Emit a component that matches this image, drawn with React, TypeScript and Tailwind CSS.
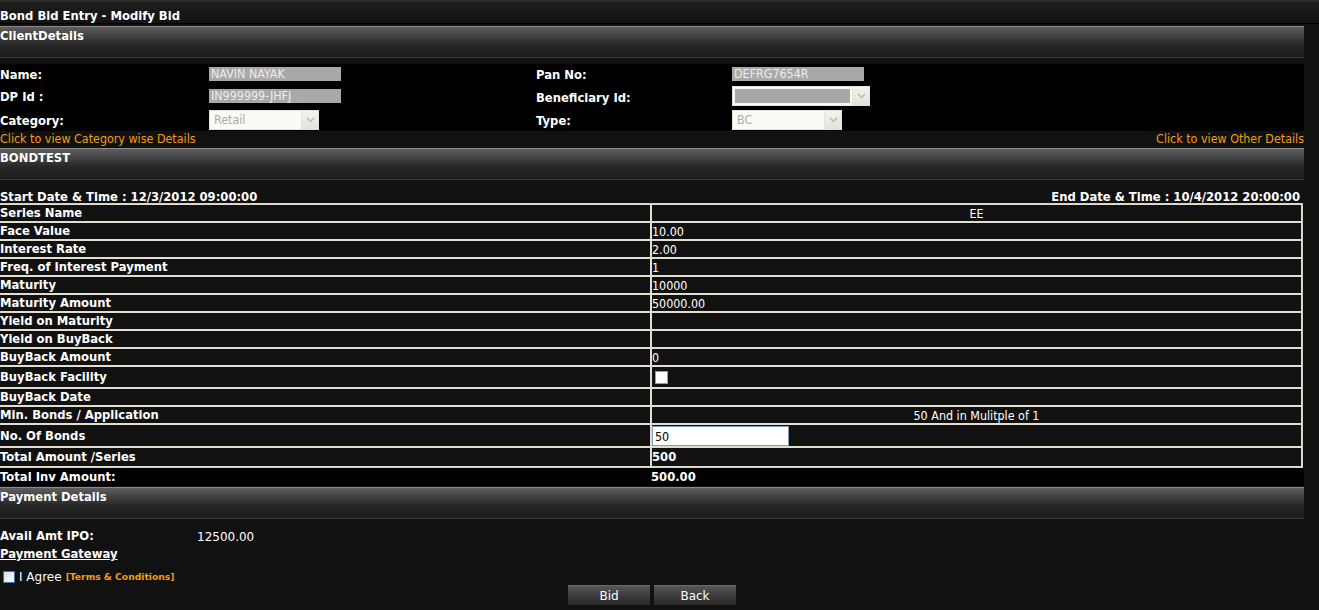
import React from 'react';

const BOLD = "font-['DejaVu_Sans',Verdana,sans-serif] font-bold text-[11.6px]";
const THIN = "font-['DejaVu_Sans_Condensed','DejaVu_Sans',Tahoma,sans-serif] text-[12.4px]";

function SectionBar({ title }: { title: string }) {
  return (
    <div className="h-[32px] w-[1304px] border-t border-[#8a8a8a] border-b border-b-[#3c3c3c] bg-[linear-gradient(to_bottom,#5e5e5e_0%,#464646_25%,#262626_60%,#1c1c1c_100%)] pt-[2px]">
      <div className={`${BOLD} text-white leading-[15px]`}>{title}</div>
    </div>
  );
}

function Chevron() {
  return (
    <svg width="9" height="6" viewBox="0 0 9 6" fill="none" stroke="#b8b8b0" strokeWidth="1.5">
      <path d="M1 1l3.5 3.5L8 1" />
    </svg>
  );
}

function FakeSelect({ width, value, gray }: { width: string; value?: string; gray?: boolean }) {
  return (
    <div className={`${width} h-[20px] flex border border-[#e4e4dc] bg-[#fbfbf6]`}>
      <div className={`flex-1 flex items-center px-[4px] ${gray ? 'bg-[#a8a8a8] m-[2px]' : ''}`}>
        <span className={`${THIN} text-[#ababab]`}>{value}</span>
      </div>
      <div className="w-[17px] flex items-center justify-center border-l border-[#e4e4dc] bg-[linear-gradient(to_bottom,#f4f4ee,#e2e2da)]">
        <Chevron />
      </div>
    </div>
  );
}

function GrayInput({ value }: { value: string }) {
  return (
    <div className="w-[132px] h-[14px] bg-[#a9a9a9] flex items-center px-[2px]">
      <span className={`${THIN} text-[#ececec] leading-[14px]`}>{value}</span>
    </div>
  );
}

const rows: { label: string; value?: React.ReactNode; h: string; center?: boolean; bold?: boolean }[] = [
  { label: 'Series Name', value: 'EE', h: 'h-[18px]', center: true },
  { label: 'Face Value', value: '10.00', h: 'h-[18px]' },
  { label: 'Interest Rate', value: '2.00', h: 'h-[18px]' },
  { label: 'Freq. of Interest Payment', value: '1', h: 'h-[18px]' },
  { label: 'Maturity', value: '10000', h: 'h-[18px]' },
  { label: 'Maturity Amount', value: '50000.00', h: 'h-[18px]' },
  { label: 'Yield on Maturity', h: 'h-[18px]' },
  { label: 'Yield on BuyBack', h: 'h-[18px]' },
  { label: 'BuyBack Amount', value: '0', h: 'h-[18px]' },
  {
    label: 'BuyBack Facility',
    value: <div className="ml-[3px] w-[13px] h-[13px] bg-white border border-[#9a9a9a]" />,
    h: 'h-[22px]',
  },
  { label: 'BuyBack Date', h: 'h-[18px]' },
  { label: 'Min. Bonds / Application', value: '50 And in Mulitple of 1', h: 'h-[18px]', center: true },
  {
    label: 'No. Of Bonds',
    value: (
      <div className="w-[137px] h-[20px] bg-white border border-[#7f9db9] flex items-center px-[2px]">
        <span className={`${THIN} text-black`}>50</span>
      </div>
    ),
    h: 'h-[22px]',
  },
  { label: 'Total Amount /Series', value: '500', h: 'h-[20px]', bold: true },
];

export default function App() {
  return (
    <div className="min-h-screen w-[1319px] bg-[#111111] overflow-hidden">
      {/* Title */}
      <div className="h-[24px] w-full border-t-2 border-[#2a2a2a] border-b border-b-black bg-[linear-gradient(to_bottom,#1e1e1e,#131313)] pt-[6px]">
        <div className={`${BOLD} text-white leading-[16px]`}>Bond Bid Entry - Modify Bid</div>
      </div>
      <div className="h-[2px]" />

      <div className="w-[1304px]">
        <SectionBar title="ClientDetails" />
        <div className="h-[6px]" />

        {/* Client details panel */}
        <div className="bg-black h-[67px] pt-[3px]">
          <div className="grid grid-cols-[209px_327px_196px_1fr] grid-rows-[22px_22px_21px] items-start">
            <div className={`${BOLD} text-white`}>Name:</div>
            <GrayInput value="NAVIN NAYAK" />
            <div className={`${BOLD} text-white`}>Pan No:</div>
            <GrayInput value="DEFRG7654R" />

            <div className={`${BOLD} text-white`}>DP Id :</div>
            <GrayInput value="IN999999-JHFJ" />
            <div className={`${BOLD} text-white pt-[1px]`}>Beneficiary Id:</div>
            <div className="-mt-[3px]">
              <FakeSelect width="w-[138px]" gray />
            </div>

            <div className={`${BOLD} text-white pt-[2px]`}>Category:</div>
            <div className="-mt-[1px]">
              <FakeSelect width="w-[110px]" value="Retail" />
            </div>
            <div className={`${BOLD} text-white pt-[2px]`}>Type:</div>
            <div className="-mt-[1px]">
              <FakeSelect width="w-[110px]" value="BC" />
            </div>
          </div>
        </div>

        {/* Links */}
        <div className="h-[17px] flex justify-between items-center">
          <span className={`${THIN} text-[#f39c12]`}>Click to view Category wise Details</span>
          <span className={`${THIN} text-[#f39c12]`}>Click to view Other Details</span>
        </div>

        <SectionBar title="BONDTEST" />

        {/* Dates */}
        <div className="h-[23px] flex justify-between items-end pr-[4px]">
          <span className={`${BOLD} text-white leading-[12px]`}>Start Date &amp; Time : 12/3/2012 09:00:00</span>
          <span className={`${BOLD} text-white leading-[12px]`}>End Date &amp; Time : 10/4/2012 20:00:00</span>
        </div>

        {/* Series table */}
        <table className="-ml-[2px] w-[1305px] table-fixed border-separate border-spacing-0 border border-[#d6d2c4]">
          <colgroup>
            <col className="w-[652px]" />
            <col />
          </colgroup>
          <tbody>
            {rows.map((r) => (
              <tr key={r.label}>
                <td className={`border border-[#e2decf] p-0 ${r.h}`}>
                  <div className={`${BOLD} text-white leading-[15px] pt-[1px]`}>{r.label}</div>
                </td>
                <td className={`border border-[#e2decf] p-0 ${r.h}`}>
                  <div
                    className={`${r.bold ? BOLD : THIN} text-white leading-[15px] pt-[1px] flex items-center ${
                      r.center ? 'justify-center' : ''
                    }`}
                  >
                    {r.value}
                  </div>
                </td>
              </tr>
            ))}
          </tbody>
        </table>
        <div className="bg-black h-[18px] flex items-center pt-[1px]">
          <span className={`${BOLD} text-white w-[651px]`}>Total Inv Amount:</span>
          <span className={`${BOLD} text-white`}>500.00</span>
        </div>
        <div className="h-[1px]" />

        <SectionBar title="Payment Details" />

        {/* Payment */}
        <div className="pt-[9px]">
          <div className="flex items-center h-[18px]">
            <span className={`${BOLD} text-white w-[197px]`}>Avail Amt IPO:</span>
            <span className="font-['DejaVu_Sans',Verdana,sans-serif] text-[12px] text-white">12500.00</span>
          </div>
          <div className="h-[18px] flex items-center">
            <span className={`${BOLD} text-white underline`}>Payment Gateway</span>
          </div>
          <div className="flex items-center h-[22px] mt-[2px] pl-[3px] gap-[4px]">
            <div className="w-[12px] h-[12px] border border-[#3c6aa8] bg-[linear-gradient(135deg,#d8dde4,#ffffff)]" />
            <span className="font-['DejaVu_Sans',Verdana,sans-serif] text-[12px] text-white">I Agree</span>
            <span className="font-['DejaVu_Sans',Verdana,sans-serif] text-[9.2px] font-bold text-[#f39c12]">
              [Terms &amp; Conditions]
            </span>
          </div>
          <div className="flex justify-center gap-[4px] mt-[-3px]">
            <button className="w-[82px] h-[20px] bg-[linear-gradient(to_bottom,#575757,#3c3c3c_50%,#2a2a2a)] border-t border-[#6a6a6a] font-['DejaVu_Sans',Verdana,sans-serif] text-[12px] text-white">
              Bid
            </button>
            <button className="w-[82px] h-[20px] bg-[linear-gradient(to_bottom,#575757,#3c3c3c_50%,#2a2a2a)] border-t border-[#6a6a6a] font-['DejaVu_Sans',Verdana,sans-serif] text-[12px] text-white">
              Back
            </button>
          </div>
        </div>
      </div>
    </div>
  );
}
